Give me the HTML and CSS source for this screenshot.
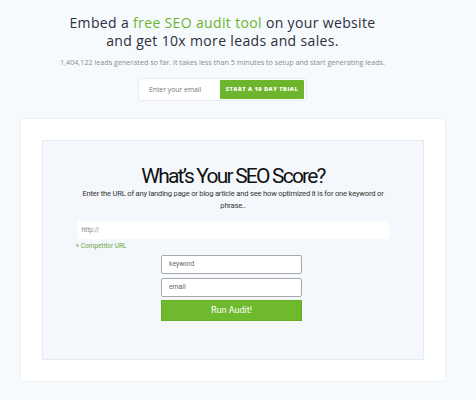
FILE: index.html
```html
<!DOCTYPE html>
<html>
<head>
<meta charset="utf-8">
<link rel="stylesheet" href="styles.css">
</head>
<body>
<div class="page">
  <section class="hero">
    <h1 class="hero-title">Embed a <span class="accent">free SEO audit tool</span> on your website<br>and get 10x more leads and sales.</h1>
    <p class="hero-sub">1,404,122 leads generated so far. It takes less than 5 minutes to setup and start generating leads.</p>
    <form class="signup">
      <span class="signup-input">Enter your email</span>
      <span class="signup-btn">START A 10 DAY TRIAL</span>
    </form>
  </section>
  <section class="card">
    <div class="panel">
      <h2 class="panel-title">What’s Your SEO Score?</h2>
      <p class="panel-desc">Enter the URL of any landing page or blog article and see how optimized it is for one keyword or phrase..</p>
      <div class="url-group">
        <div class="url-input">http://</div>
        <div class="competitor">+ Competitor URL</div>
      </div>
      <div class="field first">keyword</div>
      <div class="field">email</div>
      <div class="run-btn">Run Audit!</div>
    </div>
  </section>
</div>
</body>
</html>
```
FILE: styles.css
```css
html, body {
  margin: 0;
  padding: 0;
}
body {
  background: #f6fafd;
  font-family: "Open Sans", sans-serif;
  width: 476px;
  height: 400px;
  overflow: hidden;
}
.page {
  width: 445px;
}
.hero {
  display: flex;
  flex-direction: column;
  align-items: center;
  text-align: center;
  padding-top: 14px;
}
.hero-title {
  margin: 0;
  font-family: "Open Sans", sans-serif;
  font-weight: 400;
  font-size: 14px;
  line-height: 18px;
  color: #2e2e40;
  letter-spacing: 0.35px;
}
.accent {
  color: #6bb42e;
}
.hero-sub {
  margin: 7px 0 0;
  font-size: 7.2px;
  color: #8a8a94;
  line-height: 10px;
}
.signup {
  display: flex;
  align-items: center;
  box-sizing: border-box;
  width: 169px;
  height: 23px;
  margin: 11px 0 0;
  padding: 2px;
  background: #fff;
  border: 1px solid #e8ebef;
  border-radius: 3px;
}
.signup-input {
  flex: 1;
  text-align: left;
  padding-left: 8px;
  font-size: 6.8px;
  color: #777;
}
.signup-btn {
  width: 84px;
  height: 19px;
  line-height: 19px;
  background: #6cb52d;
  color: #fff;
  font-size: 5.6px;
  font-weight: 800;
  letter-spacing: 0.5px;
  border-radius: 1px;
}
.card {
  box-sizing: border-box;
  width: 424px;
  height: 262px;
  margin: 18px 0 0 21px;
  padding: 21px;
  background: #fff;
  border-radius: 3px;
  box-shadow: 0 0 2px rgba(200, 210, 225, 0.6);
}
.panel {
  box-sizing: border-box;
  height: 220px;
  background: #f4f8fd;
  border: 1px solid #e6ebf2;
  display: flex;
  flex-direction: column;
  align-items: center;
  padding-top: 24px;
  font-family: Roboto, sans-serif;
}
.panel-title {
  margin: 0;
  font-family: Roboto, "Liberation Sans", sans-serif;
  font-weight: 400;
  font-size: 21px;
  line-height: 23px;
  letter-spacing: -1.8px;
  color: #111;
}
.panel-desc {
  margin: 0;
  width: 306px;
  text-align: center;
  font-size: 7.6px;
  line-height: 12px;
  letter-spacing: -0.2px;
  color: #333;
}
.url-group {
  width: 315px;
  margin-top: 9px;
  display: flex;
  flex-direction: column;
  align-items: flex-end;
}
.url-input {
  box-sizing: border-box;
  width: 311px;
  height: 18px;
  margin-right: 2px;
  background: #fff;
  padding-left: 4px;
  font-size: 6.5px;
  line-height: 18px;
  color: #888;
}
.competitor {
  align-self: flex-start;
  margin-top: 3px;
  font-size: 6.5px;
  color: #6aa53a;
  line-height: 9px;
}
.field {
  box-sizing: border-box;
  width: 141px;
  height: 19px;
  margin-top: 4px;
  margin-right: 3px;
  background: #fff;
  border: 1px solid #a9a9a9;
  border-radius: 2px;
  padding-left: 7px;
  font-size: 6.8px;
  line-height: 17px;
  color: #666;
}
.field.first {
  margin-top: 4px;
}
.run-btn {
  box-sizing: border-box;
  width: 141px;
  height: 21px;
  margin-top: 3px;
  margin-right: 3px;
  background: #6fb92c;
  border: 1px solid #67ad28;
  color: #fff;
  text-align: center;
  font-size: 9px;
  line-height: 19px;
}
```
